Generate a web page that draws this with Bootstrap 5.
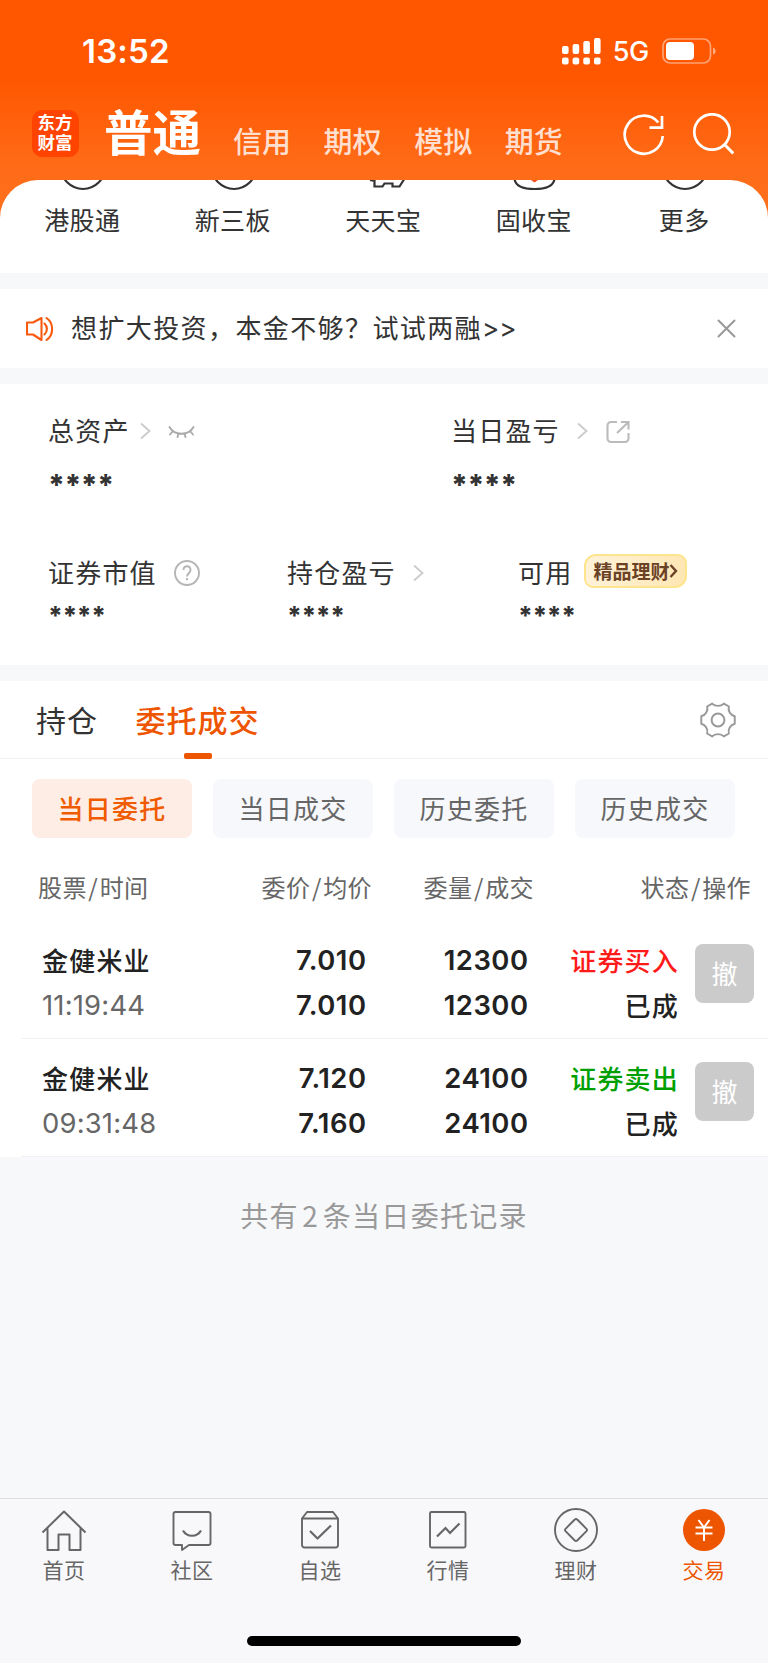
<!DOCTYPE html>
<html lang="zh-CN">
<head>
<meta charset="utf-8">
<meta name="viewport" content="width=device-width, initial-scale=1">
<title>交易</title>
<link href="https://cdn.jsdelivr.net/npm/bootstrap@5.3.0/dist/css/bootstrap.min.css" rel="stylesheet">
<style>
  :root { --brand: #ee5500; --ink: #333; --muted: #666; --page: #f7f8fa; }
  body { font-family: "Noto Sans CJK SC", sans-serif; color: var(--ink); background: var(--page); font-size: 26px; letter-spacing: 1.2px; line-height: 36px; overflow: hidden; }
  svg { display: block; flex: none; fill: none; }
  .app { width: 768px; height: 1663px; }
  .num { font-family: Inter, sans-serif; letter-spacing: 0; }

  .hero { height: 230px; margin-bottom: -50.5px; background: linear-gradient(#ff5600 0, #ff5600 76px, #ff6b17 165px, #ff721f 230px); color: #fff; }
  .status { height: 103px; padding: 0 51px 2px 82px; }
  .clock { font-size: 33px; font-weight: 600; letter-spacing: .2px; }
  .net { font-size: 27px; font-weight: 500; margin: 3px 13px 0 12px; letter-spacing: -.3px; }
  .heading { height: 54px; padding: 0 34px 0 32px; letter-spacing: 0; }
  .logo { width: 47px; height: 47px; border-radius: 10px; background: #ff4300; font-family: "Liberation Sans", "Noto Sans CJK SC", sans-serif; font-size: 17.5px; font-weight: 700; line-height: 20px; margin-top: 7px; padding: 0 1px 1px 0; }
  .acct { font-size: 48.5px; font-weight: 700; line-height: 54px; margin-left: 25px; width: 100px; }
  .kinds { font-size: 29px; font-weight: 500; gap: 32.6px; margin-left: 29px; padding-top: 20px; color: #ffdfcf; }

  .sheet { height: 93.5px; border-radius: 38px 38px 0 0; overflow: hidden; padding: 0 8px 0 7px; letter-spacing: .4px; }
  .shortcut { width: 150.5px; font-size: 25px; }
  .shortcut svg { height: 11px; margin-bottom: 10.5px; }
  .gap-band { height: 16px; }
  .notice { height: 79px; padding: 0 32px 0 26px; letter-spacing: 1.4px; }
  .notice span { padding-bottom: 2px; }

  .assets { height: 281px; padding: 28px 0 0 48px; }
  .primary-row { height: 142px; }
  .primary-row > div { width: 403px; flex: none; }
  .primary-row > div:last-child { width: 300px; }
  .field { height: 36px; }
  .stars { font-weight: 800; font-size: 29px; letter-spacing: -.5px; line-height: 30px; margin-top: 22px; }
  .stars-sm { font-weight: 800; font-size: 25.4px; letter-spacing: -.4px; line-height: 30px; margin-top: 11px; }
  .promo { height: 34px; width: 103px; margin: 0 0 2px 12px; border: 2px solid #fde58e; border-radius: 12px 9px 12px 9px; background: linear-gradient(100deg, #fff2da, #ffe7b3); color: #6b4226; font-size: 19px; font-weight: 700; letter-spacing: 0; line-height: 28px; padding: 0 0 1px 7px; }

  .tabs { height: 78px; border-bottom: 1px solid #f3f3f5; padding: 0 32px 0 36px; font-size: 30px; letter-spacing: 1px; }
  .tabs span { padding-bottom: 2px; }
  .tabs .on { color: var(--brand); font-weight: 500; margin-left: 37.5px; height: 77px; }
  .tabs .on::after { content: ""; position: absolute; left: 50%; bottom: -1px; width: 28px; height: 6px; margin-left: -14px; border-radius: 2px; background: var(--brand); }
  .pills { padding: 20px 33px 0 32px; }
  .pill { width: 160px; height: 59px; border-radius: 8px; background: #f7f8fb; color: var(--muted); padding-bottom: 2px; }
  .pill.on { background: #feede5; color: #f05a00; font-weight: 500; }

  .cols { display: grid; grid-template-columns: 200px 134px 162px 217px; height: 83px; padding: 31px 0 0 38px; font-size: 24px; letter-spacing: .4px; color: var(--muted); }
  .cols i { font-style: normal; margin: 0 1.5px; }
  .order { display: grid; height: 118px; margin-left: 21px; padding: 17px 0 0 21px; border-bottom: 1px solid #f1f1f3; grid-template-columns: 200px 124.500px 162px 150.500px 76px; color: #222; font-weight: 500; line-height: 45px; }
  .order .num { font-size: 27.4px; font-weight: 600; letter-spacing: .5px; }
  .order .when { font-weight: 400; color: var(--muted); letter-spacing: .2px; padding-top: 1px; }
  .order .zh { margin-top: -1px; }
  .buy { color: #ff1a1a; } .sell { color: #00a000; }
  .cancel { width: 59px; height: 59px; margin: 6px 0 0 16px; border-radius: 8px; background: #cbcbcb; color: #fff; font-weight: 400; letter-spacing: 0; padding-bottom: 2px; }
  .summary { height: 341px; padding-top: 40px; font-size: 28px; letter-spacing: 1.3px; word-spacing: -4px; color: #999; }

  .dock { height: 165px; background: #f8f8fb; border-top: 1px solid #dedee0; color: var(--muted); }
  .dock-item { width: 128px; padding-top: 8px; font-size: 21px; letter-spacing: .4px; line-height: 29px; }
  .home-bar { width: 274px; height: 10px; border-radius: 5px; background: #000; margin-top: 52px; }
</style>
</head>
<body>
<div class="app d-flex flex-column">
  <header class="hero flex-shrink-0">
    <div class="status d-flex align-items-center">
      <span class="clock num me-auto">13:52</span>
      <svg width="39" height="28" viewBox="0 0 39 28"><g fill="#fff"><rect y="9" width="6.6" height="8" rx="2"/><rect x="10.6" y="7" width="6.6" height="10" rx="2"/><rect x="21.3" y="4" width="6.6" height="13" rx="2"/><rect x="32" y="1" width="6.6" height="16" rx="2"/><rect y="20.500" width="6.600" height="7" rx="2"/><rect x="10.600" y="20.500" width="6.600" height="7" rx="2"/><rect x="21.300" y="20.500" width="6.600" height="7" rx="2"/><rect x="32" y="20.500" width="6.600" height="7" rx="2"/></g></svg>
      <span class="net num">5G</span>
      <svg width="55" height="26" viewBox="0 0 55 26"><rect x="1" y="1" width="47.500" height="24" rx="7" stroke="#fff" stroke-opacity=".45" stroke-width="1.700"/><rect x="4" y="4" width="28" height="18" rx="4" fill="#fff"/><path d="M51 9.500c3.500 1 3.500 6 0 7z" fill="#fff" fill-opacity=".5"/></svg>
    </div>
    <div class="heading d-flex align-items-center">
      <div class="logo d-flex flex-column align-items-center justify-content-center"><span>东方</span><span>财富</span></div>
      <div class="acct">普通</div>
      <nav class="kinds d-flex"><span>信用</span><span>期权</span><span>模拟</span><span>期货</span></nav>
      <svg class="ms-auto" style="margin-top:9px" width="42" height="42" viewBox="0 0 42 42" stroke="#fff" stroke-width="2.700"><path d="M39.700 22a19 19 0 1 1-4.400-13.500M39 2v11.700H26.500"/></svg>
      <svg class="mt-2" style="margin-left:27px" width="42" height="42" viewBox="0 0 42 42" stroke="#fff" stroke-width="2.700"><circle cx="20" cy="19" r="17.700"/><path d="M32 31l9.300 9.500" stroke-width="3"/></svg>
    </div>
  </header>

  <section class="sheet bg-white d-flex flex-shrink-0 position-relative">
    <div class="shortcut d-flex flex-column align-items-center"><svg width="50" viewBox="0 0 50 11" stroke="#333" stroke-width="2.200"><circle cx="26" cy="-13" r="22"/></svg>港股通</div>
    <div class="shortcut d-flex flex-column align-items-center"><svg width="50" viewBox="0 0 50 11" stroke="#333" stroke-width="2.200"><circle cx="26" cy="-13" r="22"/></svg>新三板</div>
    <div class="shortcut d-flex flex-column align-items-center"><svg width="50" viewBox="0 0 50 11" stroke="#333" stroke-width="2.200"><path d="M12 0l4.500 1v5.500h8L26.500 3.500h8V6.500h7l4.500-7"/></svg>天天宝</div>
    <div class="shortcut d-flex flex-column align-items-center"><svg width="50" viewBox="0 0 50 11" stroke="#333" stroke-width="2.200"><path d="M5.500-1c1 7.500 8 10 20 10s19-2.500 20-10"/><path d="M22 0h7l-3.500 2.600z" fill="#ff4a1a" stroke="none"/></svg>固收宝</div>
    <div class="shortcut d-flex flex-column align-items-center"><svg width="50" viewBox="0 0 50 11" stroke="#333" stroke-width="2.200"><circle cx="26" cy="-13" r="22"/></svg>更多</div>
  </section>
  <div class="gap-band flex-shrink-0"></div>

  <section class="notice bg-white d-flex align-items-center flex-shrink-0">
    <svg width="28" height="26" viewBox="0 0 28 26" stroke="#f9590f" stroke-width="2.100" stroke-linejoin="round" stroke-linecap="round"><path d="M1 6.500h6L15.500 2v22L7 18.500H1zM18.500 7.500c3.200 3 3.200 8 0 11M20.500 2c7.500 5 7.500 17 0 22"/></svg>
    <span class="me-auto" style="margin-left:17px">想扩大投资，本金不够？试试两融<b class="num fw-normal">&gt;&gt;</b></span>
    <svg width="19" height="19" viewBox="0 0 19 19" stroke="#999" stroke-width="2" stroke-linecap="round"><path d="M1.500 1.500l16 16M17.500 1.500l-16 16"/></svg>
  </section>
  <div class="gap-band flex-shrink-0"></div>

  <section class="assets bg-white flex-shrink-0">
    <div class="primary-row d-flex">
      <div>
        <div class="field d-flex align-items-center">总资产
          <svg style="margin:2px 16.500px 0 10.500px" width="11" height="18" viewBox="0 0 11 18" stroke="#ccc" stroke-width="1.900"><path d="M1 1.500L9.500 9 1 16.500"/></svg>
          <svg style="margin-top:4px" width="27" height="14" viewBox="0 0 27 14" stroke="#aaa" stroke-width="1.900" stroke-linecap="round"><path d="M1.500 2c5 9 19 9 24 0M5 6l-3 3.500M10.500 8.500L9.500 12M16.500 8.500l1 3.500M22 6l3 3.500"/></svg>
        </div>
        <div class="stars num">****</div>
      </div>
      <div>
        <div class="field d-flex align-items-center">当日盈亏
          <svg style="margin:2px 18px 0 17px" width="11" height="18" viewBox="0 0 11 18" stroke="#ccc" stroke-width="1.900"><path d="M1 1.500L9.500 9 1 16.500"/></svg>
          <svg class="mt-1" width="24" height="24" viewBox="0 0 24 24" stroke="#bbb" stroke-width="2.100"><path d="M11 2H5a3.500 3.500 0 0 0-3.500 3.500v13A3.500 3.500 0 0 0 5 22h14a3.500 3.500 0 0 0 3.500-3.500V13M15 2h7.500v7.500M22 2.500L11 13"/></svg>
        </div>
        <div class="stars num">****</div>
      </div>
    </div>
    <div class="d-flex">
      <div style="width:239px">
        <div class="field d-flex align-items-center">证券市值
          <svg style="margin:1px 0 0 17px" width="26" height="26" viewBox="0 0 26 26" stroke="#b5b5b5" stroke-width="1.900"><circle cx="13" cy="13" r="12"/><path d="M9.500 10c0-5 7-5 7 0 0 3-3.500 3.500-3.500 6.500M13 18v2.300"/></svg>
        </div>
        <div class="stars-sm num">****</div>
      </div>
      <div style="width:231px">
        <div class="field d-flex align-items-center">持仓盈亏
          <svg style="margin:1px 0 0 17px" width="11" height="18" viewBox="0 0 11 18" stroke="#ccc" stroke-width="1.900"><path d="M1 1.500L9.500 9 1 16.500"/></svg>
        </div>
        <div class="stars-sm num">****</div>
      </div>
      <div>
        <div class="field d-flex align-items-center">可用
          <div class="promo d-flex align-items-center">精品理财<svg width="9" height="14" viewBox="0 0 9 14" stroke="#6b4226" stroke-width="2.400"><path d="M1.500 1L7 7l-5.500 6"/></svg></div>
        </div>
        <div class="stars-sm num">****</div>
      </div>
    </div>
  </section>
  <div class="gap-band flex-shrink-0"></div>

  <section class="bg-white flex-shrink-0">
    <div class="tabs d-flex align-items-center">
      <span>持仓</span>
      <span class="on d-flex align-items-center position-relative me-auto">委托成交</span>
      <svg style="margin-top:1px" width="36" height="36" viewBox="0 0 37 37" stroke="#999" stroke-width="2" stroke-linejoin="round"><circle cx="18.500" cy="18.500" r="6.600"/><path d="M12.500 1.600c3 3.200 9 3.200 12 0l5.200 3c-1.300 4.200 1.500 9 6 10v7.800c-4.500 1-7.300 5.800-6 10l-5.200 3c-3-3.200-9-3.200-12 0l-5.200-3c1.300-4.200-1.500-9-6-10v-7.800c4.500-1 7.300-5.800 6-10z"/></svg>
    </div>
    <div class="pills d-flex justify-content-between">
      <div class="pill on d-flex align-items-center justify-content-center">当日委托</div>
      <div class="pill d-flex align-items-center justify-content-center">当日成交</div>
      <div class="pill d-flex align-items-center justify-content-center">历史委托</div>
      <div class="pill d-flex align-items-center justify-content-center">历史成交</div>
    </div>
    <div class="cols">
      <div>股票<i>/</i>时间</div><div class="text-end">委价<i>/</i>均价</div><div class="text-end">委量<i>/</i>成交</div><div class="text-end">状态<i>/</i>操作</div>
    </div>
    <div class="order">
      <div><div class="zh">金健米业</div><div class="num when">11:19:44</div></div>
      <div class="text-end num">7.010<br>7.010</div>
      <div class="text-end num">12300<br>12300</div>
      <div class="text-end zh"><span class="buy">证券买入</span><br>已成</div>
      <div class="cancel d-flex align-items-center justify-content-center">撤</div>
    </div>
    <div class="order">
      <div><div class="zh">金健米业</div><div class="num when">09:31:48</div></div>
      <div class="text-end num">7.120<br>7.160</div>
      <div class="text-end num">24100<br>24100</div>
      <div class="text-end zh"><span class="sell">证券卖出</span><br>已成</div>
      <div class="cancel d-flex align-items-center justify-content-center">撤</div>
    </div>
  </section>

  <div class="summary text-center flex-shrink-0">共有 2 条当日委托记录</div>

  <footer class="dock flex-shrink-0">
    <nav class="d-flex">
      <div class="dock-item d-flex flex-column align-items-center"><svg width="46" height="48" viewBox="0 0 46 48" stroke="#666" stroke-width="2" stroke-linejoin="round"><path d="M1.500 25.500L23 4.500l21.500 21M6.500 21.500V43h11V27.500h11V43h11V21.500"/></svg>首页</div>
      <div class="dock-item d-flex flex-column align-items-center"><svg width="46" height="48" viewBox="0 0 46 48" stroke="#666" stroke-width="1.900" stroke-linejoin="round"><path d="M6.500 5h33a2 2 0 0 1 2 2v29a2 2 0 0 1-2 2H20l-7 5v-5H6.500a2 2 0 0 1-2-2V7a2 2 0 0 1 2-2z"/><path d="M14 23.500c4 7 14 7 18 0" stroke-width="2.200"/></svg>社区</div>
      <div class="dock-item d-flex flex-column align-items-center"><svg width="46" height="48" viewBox="0 0 46 48" stroke="#666" stroke-width="1.900" stroke-linejoin="round"><path d="M5 11.500l5-6.500h26l5 6.500V38a2.500 2.500 0 0 1-2.500 2.500h-31A2.500 2.500 0 0 1 5 38zM5 11.500h36"/><path d="M13 24l7.500 7.500L34 18.500" stroke-width="2.200"/></svg>自选</div>
      <div class="dock-item d-flex flex-column align-items-center"><svg width="46" height="48" viewBox="0 0 46 48" stroke="#666" stroke-width="1.900"><rect x="5" y="5" width="35.500" height="35.500" rx="1.500"/><path d="M12 29.500l8.500-8.500 4.500 5L34.500 16.500" stroke-width="2.200"/></svg>行情</div>
      <div class="dock-item d-flex flex-column align-items-center"><svg width="46" height="48" viewBox="0 0 46 48" stroke="#666" stroke-width="1.900" stroke-linejoin="round"><circle cx="23" cy="23" r="21"/><path d="M21.800 12.500q1.200-1 2.400 0l9.300 9.300q1 1.200 0 2.400l-9.300 9.300q-1.200 1-2.400 0l-9.300-9.300q-1-1.200 0-2.400z"/></svg>理财</div>
      <div class="dock-item d-flex flex-column align-items-center" style="color:var(--brand)"><svg width="46" height="48" viewBox="0 0 46 48" stroke="#fff" stroke-width="2"><circle cx="23" cy="23" r="21" fill="#ee5500" stroke="none"/><path d="M17.500 13l5.500 7.500L28.500 13M23 20v14M14.500 20.500h17M14.500 26.500h17"/></svg>交易</div>
    </nav>
    <div class="d-flex justify-content-center"><div class="home-bar"></div></div>
  </footer>
</div>
<script src="https://cdn.jsdelivr.net/npm/bootstrap@5.3.0/dist/js/bootstrap.bundle.min.js"></script>
</body>
</html>
